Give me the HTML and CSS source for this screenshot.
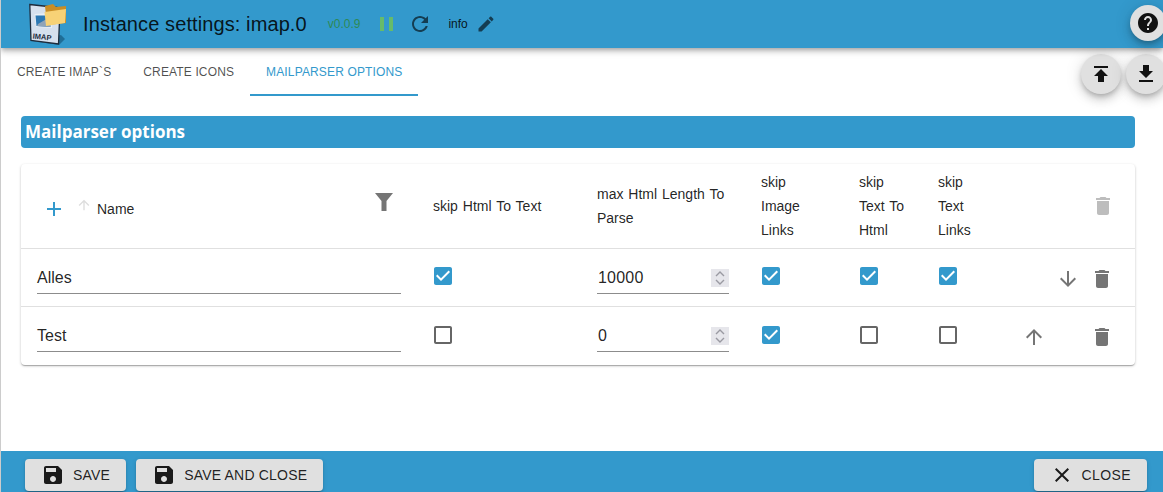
FILE: index.html
```html
<!DOCTYPE html>
<html lang="en">
<head>
  <meta charset="UTF-8" />
  <title>Instance settings: imap.0</title>
  <link rel="stylesheet" href="styles.css">
</head>
<body>
  <svg class="sprites" aria-hidden="true">
    <symbol id="i-checked" viewBox="0 0 24 24"><path d="M19 3H5c-1.11 0-2 .9-2 2v14c0 1.1.89 2 2 2h14c1.11 0 2-.9 2-2V5c0-1.1-.89-2-2-2zm-9 14l-5-5 1.41-1.41L10 14.17l7.59-7.59L19 8l-9 9z"/></symbol>
    <symbol id="i-unchecked" viewBox="0 0 24 24"><path d="M19 5v14H5V5h14m0-2H5c-1.1 0-2 .9-2 2v14c0 1.1.9 2 2 2h14c1.1 0 2-.9 2-2V5c0-1.1-.9-2-2-2z"/></symbol>
    <symbol id="i-delete" viewBox="0 0 24 24"><path d="M6 19c0 1.1.9 2 2 2h8c1.1 0 2-.9 2-2V7H6v12zM19 4h-3.5l-1-1h-5l-1 1H5v2h14V4z"/></symbol>
    <symbol id="i-up" viewBox="0 0 24 24"><path d="M4 12l1.41 1.41L11 7.83V20h2V7.83l5.58 5.59L20 12l-8-8-8 8z"/></symbol>
    <symbol id="i-down" viewBox="0 0 24 24"><path d="M20 12l-1.41-1.41L13 16.17V4h-2v12.17l-5.58-5.59L4 12l8 8 8-8z"/></symbol>
    <symbol id="i-save" viewBox="0 0 24 24"><path d="M17 3H5c-1.11 0-2 .9-2 2v14c0 1.1.89 2 2 2h14c1.1 0 2-.9 2-2V7l-4-4zm-5 16c-1.66 0-3-1.34-3-3s1.34-3 3-3 3 1.34 3 3-1.34 3-3 3zm3-10H5V5h10v4z"/></symbol>
    <symbol id="i-spin" viewBox="0 0 18 18"><path d="M5 7l4-4 4 4M5 11l4 4 4-4" fill="none" stroke="#9a9aa2" stroke-width="1.4"/></symbol>
  </svg>

  <div class="page">
    <header class="topbar">
      <svg class="logo" viewBox="0 0 38 43">
        <path d="M4 38l26 4 6-6-4-4z" fill="#1f6d96"/>
        <path d="M.8 1.500L28 4.500 31 6l-1.500 35L2 37.500z" fill="#d6e0ee" stroke="#1d2b3c" stroke-width="1.300"/>
        <path d="M5.500 11l17-1 .5 15-16 -1z" fill="#e9eef5"/>
        <path d="M6.500 12.500l14.500 0 .5 11.500-14 -1z" fill="#2c78b4"/>
        <path d="M9 21l12-7v10l-13-1z" fill="#8fa3b8"/>
        <path d="M16 3l8-2 3 3 10-1v17l-19 2z" fill="#c98d24"/>
        <path d="M15.500 9l21.500-3-1 14-19 3z" fill="#f7d276"/>
        <text x="3.500" y="35.500" class="logo-text" transform="rotate(6 3.500 35.500)">IMAP</text>
      </svg>
      <h1 class="title">Instance settings: imap.0</h1>
      <span class="version">v0.0.9</span>
      <svg class="pause" viewBox="0 0 13 14"><path d="M0 0h4v14H0zM9 0h4v14H9z"/></svg>
      <svg class="refresh" viewBox="0 0 24 24"><path d="M17.650 6.350C16.200 4.900 14.210 4 12 4c-4.420 0-7.990 3.580-7.990 8s3.570 8 7.990 8c3.730 0 6.840-2.550 7.730-6h-2.080c-.82 2.330-3.040 4-5.650 4-3.310 0-6-2.690-6-6s2.690-6 6-6c1.660 0 3.140.69 4.220 1.780L13 11h7V4l-2.350 2.350z"/></svg>
      <span class="loglevel">info</span>
      <svg class="edit" viewBox="0 0 24 24"><path d="M3 17.250V21h3.750L17.810 9.940l-3.750-3.750L3 17.250zM20.710 7.040c.39-.39.39-1.020 0-1.410l-2.340-2.340c-.39-.39-1.020-.39-1.410 0l-1.830 1.830 3.750 3.750 1.830-1.830z"/></svg>
      <button class="fab fab-help"><svg viewBox="0 0 24 24"><path d="M12 2C6.480 2 2 6.480 2 12s4.480 10 10 10 10-4.480 10-10S17.520 2 12 2zm1 17h-2v-2h2v2zm2.070-7.750l-.9.92C13.450 12.900 13 13.500 13 15h-2v-.5c0-1.100.45-2.100 1.170-2.830l1.240-1.260c.37-.36.59-.86.59-1.410 0-1.100-.9-2-2-2s-2 .9-2 2H8c0-2.210 1.790-4 4-4s4 1.790 4 4c0 .88-.36 1.680-.93 2.250z"/></svg></button>
    </header>

    <nav class="tabs">
      <a class="tab">Create IMAP`s</a>
      <a class="tab">Create Icons</a>
      <a class="tab tab-active">Mailparser options</a>
      <div class="tab-actions">
        <button class="fab"><svg viewBox="0 0 24 24"><path d="M5 4v2h14V4H5zm0 10h4v6h6v-6h4l-7-7-7 7z"/></svg></button>
        <button class="fab"><svg viewBox="0 0 24 24"><path d="M19 9h-4V3H9v6H5l7 7 7-7zM5 18v2h14v-2H5z"/></svg></button>
      </div>
    </nav>

    <main class="content">
      <h2 class="section-head">Mailparser options</h2>
      <div class="card">
        <table class="grid">
          <colgroup>
            <col class="col-name"><col class="col-a"><col class="col-b"><col class="col-c"><col class="col-d"><col class="col-e"><col class="col-btn"><col class="col-btn"><col class="col-del">
          </colgroup>
          <thead>
            <tr>
              <th>
                <div class="name-head">
                  <svg class="icon-add" viewBox="0 0 24 24"><path d="M19 13h-6v6h-2v-6H5v-2h6V5h2v6h6v2z"/></svg>
                  <svg class="icon-sort"><use href="#i-up"/></svg>
                  <span>Name</span>
                  <svg class="icon-filter" viewBox="0 0 18 18"><path d="M0 0h18l-6.500 8v10h-5V8z"/></svg>
                </div>
              </th>
              <th>skip Html To Text</th>
              <th>max Html Length To Parse</th>
              <th>skip Image Links</th>
              <th>skip Text To Html</th>
              <th class="th-narrow">skip Text Links</th>
              <th></th>
              <th></th>
              <th class="del-cell"><svg class="icon icon-off"><use href="#i-delete"/></svg></th>
            </tr>
          </thead>
          <tbody>
            <tr>
              <td><div class="field">Alles</div></td>
              <td><svg class="check on"><use href="#i-checked"/></svg></td>
              <td><div class="field field-num">10000<svg class="spin"><use href="#i-spin"/></svg></div></td>
              <td><svg class="check on"><use href="#i-checked"/></svg></td>
              <td><svg class="check on"><use href="#i-checked"/></svg></td>
              <td><svg class="check on"><use href="#i-checked"/></svg></td>
              <td></td>
              <td class="btn-cell"><svg class="icon"><use href="#i-down"/></svg></td>
              <td class="del-cell"><svg class="icon"><use href="#i-delete"/></svg></td>
            </tr>
            <tr>
              <td><div class="field">Test</div></td>
              <td><svg class="check"><use href="#i-unchecked"/></svg></td>
              <td><div class="field field-num">0<svg class="spin"><use href="#i-spin"/></svg></div></td>
              <td><svg class="check on"><use href="#i-checked"/></svg></td>
              <td><svg class="check"><use href="#i-unchecked"/></svg></td>
              <td><svg class="check"><use href="#i-unchecked"/></svg></td>
              <td class="btn-cell"><svg class="icon"><use href="#i-up"/></svg></td>
              <td></td>
              <td class="del-cell"><svg class="icon"><use href="#i-delete"/></svg></td>
            </tr>
          </tbody>
        </table>
      </div>
    </main>

    <footer class="footer">
      <button class="btn"><svg><use href="#i-save"/></svg>Save</button>
      <button class="btn"><svg><use href="#i-save"/></svg>Save and close</button>
      <button class="btn btn-close"><svg viewBox="0 0 24 24"><path d="M19 6.410L17.590 5 12 10.590 6.410 5 5 6.410 10.590 12 5 17.590 6.410 19 12 13.410 17.590 19 19 17.590 13.410 12z"/></svg>Close</button>
    </footer>
  </div>
</body>
</html>
```

FILE: styles.css
```css
html, body {
  margin: 0;
  padding: 0;
  height: 100%;
  overflow: hidden;
  background: white;
  font-family: "Liberation Sans", Arial, sans-serif;
  color: rgba(0, 0, 0, 0.87);
}

.sprites {
  display: none;
}

.page {
  height: 100vh;
  display: flex;
  flex-direction: column;
  box-sizing: border-box;
  border-left: 1px solid #ccc;
  overflow: hidden;
}

/* Top bar */
.topbar {
  flex: 0 0 48px;
  display: flex;
  align-items: center;
  background: #3399cc;
  box-shadow: 0 2px 4px -1px rgba(0,0,0,0.2), 0 4px 5px rgba(0,0,0,0.14), 0 1px 10px rgba(0,0,0,0.12);
  position: relative;
  z-index: 2;
}
.logo {
  width: 38px;
  height: 43px;
  margin-left: 28px;
  margin-top: 1px;
}
.logo-text {
  font-size: 7.500px;
  font-weight: bold;
  fill: #1d2b3c;
}
.title {
  margin: 0 0 0 16px;
  font-size: 20px;
  font-weight: normal;
  letter-spacing: 0.1px;
  color: rgba(0, 0, 0, 0.87);
}
.version {
  margin-left: 21px;
  font-size: 12px;
  color: #2e8a55;
}
.pause {
  width: 13px;
  height: 14px;
  margin-left: 20px;
  fill: #66bb6a;
}
.refresh {
  width: 24px;
  height: 24px;
  margin-left: 15px;
  fill: rgba(0, 0, 0, 0.6);
}
.loglevel {
  margin-left: 16px;
  font-size: 12px;
}
.edit {
  width: 20px;
  height: 20px;
  margin-left: 8px;
  fill: rgba(0, 0, 0, 0.6);
}

.fab {
  flex: none;
  width: 40px;
  height: 40px;
  padding: 0;
  border: none;
  border-radius: 50%;
  background: #e0e0e0;
  display: flex;
  align-items: center;
  justify-content: center;
  box-shadow: 0 3px 5px -1px rgba(0,0,0,0.2), 0 6px 10px rgba(0,0,0,0.14), 0 1px 18px rgba(0,0,0,0.12);
}
.fab svg {
  width: 24px;
  height: 24px;
  fill: #111;
}
.fab-help {
  width: 36px;
  height: 36px;
  margin-left: auto;
  margin-right: -3px;
  margin-top: -2px;
}
.fab-help svg {
  width: 24px;
  height: 24px;
}

/* Tabs */
.tabs {
  flex: 0 0 48px;
  display: flex;
  align-items: stretch;
  padding-left: 0;
  position: relative;
}
.tab {
  box-sizing: border-box;
  padding: 0 16px;
  display: flex;
  align-items: center;
  font-size: 12px;
  letter-spacing: 0.14px;
  text-transform: uppercase;
  color: rgba(0, 0, 0, 0.7);
}
.tab-active {
  color: #3399cc;
  border-bottom: 2px solid #3399cc;
  padding-top: 2px;
}
.tab-actions {
  margin-left: auto;
  margin-right: -3px;
  display: flex;
  gap: 5px;
  padding-top: 6px;
  height: 40px;
}

/* Content */
.content {
  flex: 1;
  padding: 20px 28px 0 20px;
}
.section-head {
  margin: 0 0 16px;
  height: 32px;
  line-height: 32px;
  padding-left: 4px;
  background: #3399cc;
  border-radius: 4px;
  color: white;
  font-family: "Open Sans", sans-serif;
  font-size: 17px;
  font-weight: bold;
}
.card {
  background: white;
  border-radius: 4px;
  box-shadow: 0 1px 3px rgba(0,0,0,0.2), 0 1px 1px rgba(0,0,0,0.14), 0 2px 1px -1px rgba(0,0,0,0.12);
}

.grid {
  width: 100%;
  table-layout: fixed;
  border-collapse: separate;
  border-spacing: 0;
}
.col-name { width: 396px; }
.col-a, .col-b { width: 164px; }
.col-c { width: 98px; }
.col-d { width: 79px; }
.col-e { width: 95px; }
.col-btn { width: 34px; }
.col-del { width: 50px; }

.grid th {
  height: 85px;
  padding: 0 16px;
  box-sizing: border-box;
  border-bottom: 1px solid #e0e0e0;
  text-align: left;
  font-size: 14px;
  font-weight: normal;
  line-height: 24px;
  word-spacing: 1px;
}
.grid th.th-narrow {
  padding-right: 30px;
}
.grid td {
  height: 58px;
  padding: 0 16px;
  box-sizing: border-box;
  border-bottom: 1px solid #e0e0e0;
}
.grid tbody tr:last-child td {
  border-bottom: none;
}
.grid .btn-cell,
.grid .del-cell {
  padding: 0;
}
.grid .btn-cell {
  text-align: center;
}
.grid .del-cell {
  padding-left: 5px;
}

.name-head {
  display: flex;
  align-items: center;
  padding-top: 6px;
}
.icon-add {
  width: 24px;
  height: 24px;
  margin-left: 5px;
  fill: #3399cc;
}
.icon-sort {
  width: 16px;
  height: 16px;
  margin-left: 10px;
  margin-bottom: 8px;
  margin-right: 5px;
  fill: #ddd;
}
.icon-filter {
  width: 18px;
  height: 18px;
  margin-left: auto;
  margin-right: 8px;
  margin-bottom: 14px;
  fill: #757575;
}

.icon {
  display: block;
  width: 24px;
  height: 24px;
  fill: #757575;
}
.btn-cell .icon {
  margin: 2px auto 0;
}
.del-cell .icon {
  margin-top: 2px;
}
.del-cell .icon-off {
  fill: #bdbdbd;
  margin-top: 0;
  margin-left: 1px;
}

.field {
  height: 31px;
  line-height: 30px;
  margin-top: 1px;
  box-sizing: border-box;
  border-bottom: 1px solid #8c8c8c;
  font-size: 16px;
}
.field-num {
  display: flex;
  justify-content: space-between;
  align-items: center;
  letter-spacing: 0.2px;
  padding-left: 1px;
}
.spin {
  width: 18px;
  height: 18px;
  background: #e6e6eb;
}
.check {
  display: block;
  width: 24px;
  height: 24px;
  margin-left: -2px;
  margin-bottom: 3px;
  fill: #666;
}
.check.on {
  fill: #3399cc;
}

/* Footer */
.footer {
  flex: 0 0 41px;
  box-sizing: border-box;
  display: flex;
  gap: 10px;
  padding: 8px 16px 1px 24px;
  background: #3399cc;
}
.btn {
  height: 32px;
  padding: 0 16px 0 16px;
  border: none;
  border-radius: 4px;
  background: #e0e0e0;
  display: flex;
  align-items: center;
  gap: 8px;
  font-family: inherit;
  font-size: 14px;
  letter-spacing: 0.2px;
  text-transform: uppercase;
  color: rgba(0, 0, 0, 0.87);
  box-shadow: 0 3px 1px -2px rgba(0,0,0,0.2), 0 2px 2px rgba(0,0,0,0.14), 0 1px 5px rgba(0,0,0,0.12);
}
.btn svg {
  width: 24px;
  height: 24px;
  fill: #1a1a1a;
}
.btn-close {
  margin-left: auto;
  letter-spacing: 0.4px;
}
```
